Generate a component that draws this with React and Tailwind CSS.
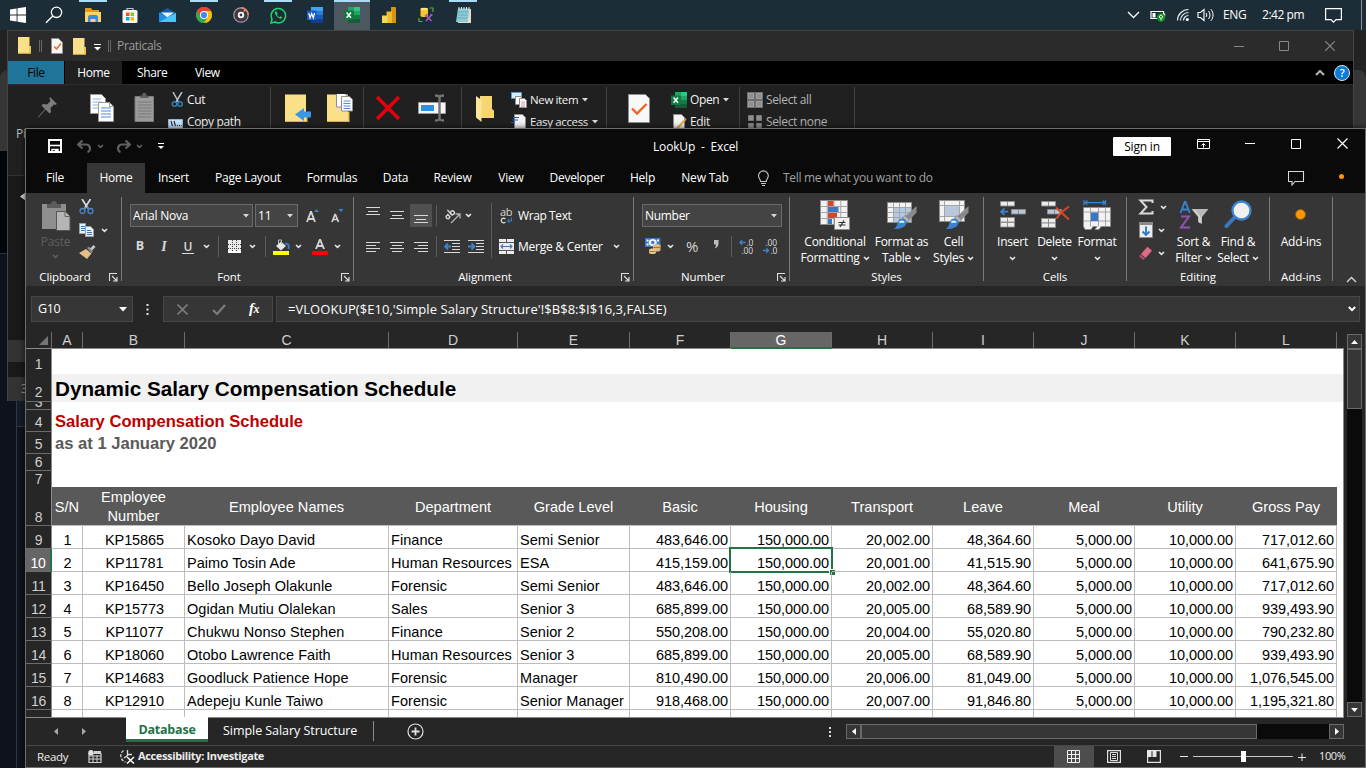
import React from "react";

/* ---------- helpers ---------- */

const Svg = ({ w, h, className = "", children }) => (
  <svg width={w} height={h} viewBox={`0 0 ${w} ${h}`} fill="none" className={`block shrink-0 ${className}`}>
    {children}
  </svg>
);

const Chevron = ({ className = "", color = "#e4e4e4" }) => (
  <Svg w={7} h={5} className={className}>
    <path d="M1 1l2.5 2.3L6 1" stroke={color} strokeWidth="1.6" />
  </Svg>
);

const Caret = ({ className = "", color = "#d8d8d8" }) => (
  <Svg w={6} h={4} className={className}>
    <path d="M0 0h6L3 3.5z" fill={color} />
  </Svg>
);

/* ---------- taskbar ---------- */

const WindowsLogo = () => (
  <Svg w={16} h={16} className="-ml-0.5">
    <path d="M0 2.4L6.6 1.4v6.1H0zM7.5 1.3L16 0v7.5H7.5zM0 8.5h6.6v6.1L0 13.6zM7.5 8.5H16V16l-8.5-1.3z" fill="#fff" />
  </Svg>
);

const SearchGlyph = () => (
  <Svg w={18} h={18} className="-ml-1">
    <circle cx="11.5" cy="6.3" r="5.2" stroke="#fff" strokeWidth="1.3" />
    <path d="M7.8 10L1 16.8" stroke="#fff" strokeWidth="1.4" />
  </Svg>
);

const ExplorerIcon = () => (
  <Svg w={16} h={14}>
    <path d="M0 0h6l1.500 2H14v3H0z" fill="#e19b16" />
    <path d="M0 4h16v10H0z" fill="#fcd462" />
    <path d="M3 14V8.500L4.500 7h7L13 8.500V14h-2.500v-3h-5v3z" fill="#3a8dd6" />
  </Svg>
);

const StoreIcon = () => (
  <Svg w={16} h={17}>
    <path d="M5 4V1.500h6V4" stroke="#b9c3c9" strokeWidth="1.2" />
    <rect x="0.500" y="3" width="15" height="13" rx="1.500" fill="#f7f7f7" />
    <path d="M4 5.500h3.500V9H4z" fill="#f1511b" />
    <path d="M8.500 5.500H12V9H8.500z" fill="#80cc28" />
    <path d="M4 10h3.500v3.500H4z" fill="#00adef" />
    <path d="M8.500 10H12v3.500H8.500z" fill="#fbbc09" />
  </Svg>
);

const MailIcon = () => (
  <Svg w={17} h={15}>
    <path d="M0 5l8.500-5L17 5v2H0z" fill="#0f5da8" />
    <path d="M0 4.500L8.500 9 17 4.500V14H0z" fill="#1f8fe0" />
    <path d="M2 4.500h13L8.500 9.500z" fill="#e8f4fc" />
    <path d="M0 14L17 5v9z" fill="#4fc3f7" />
  </Svg>
);

const ChromeIcon = () => (
  <Svg w={16} h={16}>
    <circle cx="8" cy="8" r="8" fill="#34a853" />
    <path d="M1.070 4A8 8 0 0 1 14.930 4L8 8z" fill="#ea4335" />
    <path d="M8 4h6.930A8 8 0 0 1 8 16l3.460-6z" fill="#fbbc05" />
    <path d="M1.070 4L4.540 10 8 8V4z" fill="#ea4335" />
    <path d="M1.070 4A8 8 0 0 0 8 16l3.460-6L4.540 10z" fill="#34a853" />
    <circle cx="8" cy="8" r="4" fill="#fff" />
    <circle cx="8" cy="8" r="3.100" fill="#4285f4" />
  </Svg>
);

const GrooveIcon = () => (
  <Svg w={16} h={16}>
    <circle cx="8" cy="8" r="7.200" fill="#3b3a40" stroke="#b58a9c" strokeWidth="1.300" />
    <path d="M8 .8A7.200 7.200 0 0 1 15.200 8" stroke="#e88a6a" strokeWidth="1.500" />
    <circle cx="8" cy="8" r="2.300" stroke="#fff" strokeWidth="1.800" />
    <path d="M10.500 4.500l2.500-2" stroke="#f0916b" strokeWidth="1.500" />
  </Svg>
);

const WhatsappIcon = () => (
  <Svg w={17} h={17}>
    <path d="M1 16l1-4A7.200 7.200 0 1 1 5 15z" stroke="#25d366" strokeWidth="1.500" />
    <path d="M5.500 4.500c-1 1.200-.7 2.800 1.200 4.800s3.700 3 5 1.900c.6-.6.5-1 .2-1.200l-1.500-.8-1.100 1c-1-.4-2-1.400-2.400-2.400l.8-1-.8-1.800c-.3-.7-.9-.9-1.400-.5z" fill="#25d366" />
  </Svg>
);

const WordIcon = () => (
  <Svg w={16} h={16}>
    <path d="M4 0h12v4H4z" fill="#41a5ee" />
    <path d="M4 4h12v4H4z" fill="#2b7cd3" />
    <path d="M4 8h12v4H4z" fill="#185abd" />
    <path d="M4 12h12v4H4z" fill="#103f91" />
    <path d="M0 3.500h9.500v9.500H0z" fill="#185abd" />
    <path d="M1.800 6l1.300 5 1.600-4.500L6.300 11l1.300-5" stroke="#fff" strokeWidth="1.200" />
  </Svg>
);

const ExcelIcon = () => (
  <Svg w={16} h={16}>
    <path d="M4 0h6v4H4z" fill="#21a366" />
    <path d="M10 0h6v4h-6z" fill="#33c481" />
    <path d="M4 4h6v8H4z" fill="#107c41" />
    <path d="M10 4h6v4h-6z" fill="#21a366" />
    <path d="M10 8h6v4h-6z" fill="#107c41" />
    <path d="M4 12h12v4H4z" fill="#185c37" />
    <path d="M0 3.500h9.500v9.500H0z" fill="#0e7a40" />
    <path d="M2.600 5.600l4.400 5.200M7 5.600l-4.400 5.200" stroke="#fff" strokeWidth="1.500" />
  </Svg>
);

const PowerBiIcon = () => (
  <Svg w={14} h={16}>
    <path d="M9 0h4a1 1 0 0 1 1 1v15H9z" fill="#d9930f" />
    <path d="M4.500 4.500H10V16H4.500z" fill="#eebc2c" />
    <path d="M0 8.500h5.500V16H0z" fill="#f6d751" />
  </Svg>
);

const DataToolIcon = () => (
  <Svg w={16} h={16}>
    <path d="M2.500 2c0-1.500 7.500-1.500 7.500 0v7c0 1.300-7.500 1.300-7.500 0z" fill="#f4c62a" />
    <ellipse cx="6.250" cy="2" rx="3.750" ry="1.200" fill="#ffe27a" />
    <path d="M11.500 1H15v4M1 11v3.500h3.500" stroke="#4caf3f" strokeWidth="1.200" />
    <path d="M8 8.500l5.500 5.500M13.500 8L8 14" stroke="#a35bc4" strokeWidth="1.500" />
    <path d="M7 9.500l2.500-2.500M12 7.500l2.500 1" stroke="#a35bc4" strokeWidth="1.500" />
  </Svg>
);

const NotepadIcon = () => (
  <Svg w={17} h={17}>
    <path d="M4 2h12v14H3z" fill="#e8dcc4" />
    <path d="M3 1.500h11.500L12.500 15H1z" fill="#8fc9d6" />
    <path d="M3.200 5h10M2.800 8h10M2.400 11h10" stroke="#5ea8ba" strokeWidth=".8" />
    <path d="M4 0v2.500M6.500 0v2.500M9 0v2.500M11.500 0v2.500M14 0v2.500" stroke="#dfe9ec" strokeWidth="1" />
  </Svg>
);

const taskItems = [
  { icon: <WindowsLogo /> },
  { icon: <SearchGlyph /> },
  { icon: <ExplorerIcon />, open: true },
  { icon: <StoreIcon /> },
  { icon: <MailIcon /> },
  { icon: <ChromeIcon />, open: true },
  { icon: <GrooveIcon /> },
  { icon: <WhatsappIcon />, open: true },
  { icon: <WordIcon /> },
  { icon: <ExcelIcon />, active: true },
  { icon: <PowerBiIcon /> },
  { icon: <DataToolIcon /> },
  { icon: <NotepadIcon />, open: true },
];

const Taskbar = () => (
  <div className="flex h-[30px] w-full bg-[#1c2d37]">
    <div className="ml-px flex gap-px">
      {taskItems.map((t, i) => (
        <div key={i} className={`flex h-[30px] w-9 flex-col items-center ${t.active ? "bg-[#4b5860]" : ""}`}>
          <div className={`h-0.5 ${t.active ? "w-9 bg-[#a9dcf7]" : t.open ? "w-7 bg-[#a9dcf7]" : "w-7"}`} />
          <div className="flex h-[26px] items-center">{t.icon}</div>
        </div>
      ))}
    </div>
    <div className="ml-auto flex items-center text-white">
      <Svg w={13} h={8} className="mr-[10px]">
        <path d="M1 1l5.500 5.500L12 1" stroke="#fff" strokeWidth="1.300" />
      </Svg>
      <Svg w={16} h={13} className="mr-[10px]">
        <path d="M1 2.500h12.500v7H1z" stroke="#fff" strokeWidth="1.200" />
        <path d="M2.500 4h3v4.500h-3z" fill="#fff" />
        <path d="M14 4.500h1.200v3H14z" fill="#fff" />
        <circle cx="11" cy="8.500" r="4.300" fill="#12901f" />
        <path d="M11 5.700l2 2.300-2 1.500-2-1.500zM11 9v2.500" stroke="#fff" strokeWidth=".9" />
      </Svg>
      <Svg w={14} h={14} className="mr-[7px]">
        <path d="M1.500 12.500A11 11 0 0 1 12.500 1.500M4.500 12.500a8 8 0 0 1 8-8M7.500 12.500a5 5 0 0 1 5-5" stroke="#e8eef0" strokeWidth="1.200" />
        <circle cx="11.300" cy="11.500" r="1.500" fill="#fff" />
      </Svg>
      <Svg w={17} h={14} className="mr-[9px]">
        <path d="M1 4.500h2.500L7 1.500v11L3.500 9.500H1z" stroke="#fff" strokeWidth="1.100" />
        <path d="M9 5c1 1.200 1 2.800 0 4M11.500 3c2 2.400 2 5.600 0 8M13.800 1.200c3 3.500 3 8.100 0 11.600" stroke="#fff" strokeWidth="1" />
      </Svg>
      <span className="w-[39px] text-[12px] tracking-[-0.4px]">ENG</span>
      <span className="w-[63px] whitespace-nowrap text-[12px] tracking-[-0.45px]">2:42 pm</span>
      <Svg w={17} h={16} className="mr-[19px]">
        <path d="M.6 1.600h15.800v11H11l-2.500 2.600-2.500-2.600H.6z" stroke="#fff" strokeWidth="1.200" />
      </Svg>
      <div className="mr-1 h-[30px] w-px bg-[#86929a]" />
    </div>
  </div>
);

/* ---------- file explorer ---------- */

const FolderSmall = () => (
  <Svg w={13} h={17}>
    <path d="M0 0h11.500v16.500H0z" fill="#fbe08a" />
    <path d="M11 9h2v7.500h-2z" fill="#e9c65c" />
    <path d="M0 15.800h13v.8H0z" fill="#e0b94a" />
  </Svg>
);

const Page = ({ w, h, children }) => (
  <Svg w={w} h={h}>
    <path d={`M.5 .5H${w - 4.5}L${w - 0.5} 4.500V${h - 0.5}H.5z`} fill="#f8f8f8" stroke="#8e8e8e" />
    {children}
  </Svg>
);

const CopyBig = () => (
  <Svg w={24} h={28}>
    <path d="M.5 .5h11l4 4v15H.5z" fill="#fff" stroke="#9a9a9a" />
    <path d="M2.500 5h8M2.500 8h9M2.500 11h9M2.500 14h9" stroke="#8eb0dd" strokeWidth="1.200" />
    <path d="M8.500 8.500h11l4 4v15h-15z" fill="#fff" stroke="#9a9a9a" />
    <path d="M11 14h10M11 17h10M11 20h10M11 23h10" stroke="#4f8be0" strokeWidth="1.200" />
    <path d="M19.500 8.500v4h4" stroke="#9a9a9a" />
  </Svg>
);

const ExDivider = ({ className = "" }) => <div className={`mt-0.5 h-[42px] w-px shrink-0 bg-[#414141] ${className}`} />;

const exText = "whitespace-nowrap text-[12px] leading-4 tracking-[-0.35px]";
const exTextNarrow = "whitespace-nowrap text-[11.5px] leading-4 tracking-[-0.36px]";

const FolderBig = ({ children }) => (
  <Svg w={27} h={29}>
    <path d="M0 .5h21v27H0z" fill="#fbe08a" />
    <path d="M21 18h1.500v9.500H21z" fill="#e5bf55" />
    <path d="M0 27h22.500v1H0z" fill="#dcb445" />
    {children}
  </Svg>
);

const SelectIcon = ({ boxed }) => (
  <Svg w={16} h={16}>
    {boxed && <path d="M0 0h16v16H0z" fill="#6d6d6d" />}
    <path d="M1.500 1.500h5v5h-5zM9.500 1.500h5v5h-5zM1.500 9.500h5v5h-5zM9.500 9.500h5v5h-5z" fill="#8e8e8e" stroke={boxed ? "#a2a2a2" : "#777"} />
  </Svg>
);

const Explorer = () => (
  <div className="absolute left-[7px] top-[30px] h-[371px] w-[1347px] overflow-hidden border-x border-t border-[#454545] bg-[#191919]">
    <div className="flex h-[30px] items-center bg-[#2b2b2b]">
      <div className="-mt-px ml-[10px]"><FolderSmall /></div>
      <div className="ml-[8px] flex h-3 w-[3px] border-x border-[#666]" />
      <div className="ml-[9px]">
        <Page w={12} h={16}><path d="M3 8.500l2.500 2.500L10 5.500" stroke="#f0641e" strokeWidth="1.500" /></Page>
      </div>
      <div className="ml-[10px]"><FolderSmall /></div>
      <Svg w={7} h={7} className="ml-[8px] mt-[3px]"><path d="M0 .5h7" stroke="#fff" /><path d="M0 3h7L3.500 6.500z" fill="#fff" /></Svg>
      <div className="ml-[7px] flex h-3 w-[3px] border-x border-[#666]" />
      <span className="ml-[6px] whitespace-nowrap text-[12px] tracking-[-0.32px] text-[#9b9b9b]">Praticals</span>
      <Svg w={10} h={1} className="ml-auto"><path d="M0 .5h10" stroke="#8a8a8a" /></Svg>
      <Svg w={10} h={10} className="ml-[35px]"><path d="M.5 .5h9v9h-9z" stroke="#8a8a8a" /></Svg>
      <Svg w={10} h={10} className="ml-[36px] mr-[18px]"><path d="M.3 .3l9.400 9.400M9.700 .3L.3 9.700" stroke="#8a8a8a" strokeWidth="1.200" /></Svg>
    </div>
    <div className="flex h-[23px] items-center bg-black text-[12px] tracking-[-0.38px] text-white">
      <div className="flex h-full w-14 items-center justify-center bg-[#1f7499] text-black">File</div>
      <div className="ml-px flex h-full w-[57px] items-center justify-center bg-[#202020]">Home</div>
      <span className="ml-[15px] w-[58px]">Share</span>
      <span>View</span>
      <Svg w={10} h={7} className="ml-auto"><path d="M1 6l4-4 4 4" stroke="#aeb4b8" strokeWidth="2" /></Svg>
      <div className="ml-[9px] mr-[3px] flex size-4 items-center justify-center rounded-full border border-[#d5e6f7] bg-[#0b7bdc] text-[11px] font-semibold leading-none">?</div>
    </div>
    <div className="flex h-[92px] items-start border-b border-t border-b-[#333] border-t-[#2c2c2c] bg-[#202020] text-[#f2f2f2]">
      <div className="flex w-[82px] flex-col">
        <Svg w={22} h={22} className="ml-[29px] mt-3">
          <path d="M13 0l7 7-2 1-1-.5-3.500 3.500.5 4-1.500 1.500-4-4-7 8-.5-.5L8 12 4.500 8.500 6 7l4 .5L13.500 4 12.500 2z" fill="#7d7d7d" />
        </Svg>
        <span className="ml-[8px] mt-[7px] text-[12px] leading-4 tracking-[-0.3px] text-[#bdbdbd]">Pi</span>
      </div>
      <div className="mt-[9px]"><CopyBig /></div>
      <Svg w={21} h={29} className="ml-[20px] mt-2">
        <path d="M1 3.500h18.500v25H1z" fill="#9c9c9c" stroke="#7a7a7a" />
        <path d="M6 5V2.500h2.500V0h3.500v2.500h2.500V5z" fill="#5e5e5e" />
        <path d="M3.500 9h14M3.500 12h14M3.500 15h14M3.500 18h14M3.500 21h14M3.500 24h14" stroke="#787878" />
      </Svg>
      <div className="ml-[13px] mt-[7px] flex w-[102px] flex-col gap-[6px]">
        <div className="flex h-4 items-center">
          <Svg w={13} h={16} className="ml-[3px] mr-[3px]">
            <path d="M2 0l5.500 10M11 0L5 10" stroke="#b7c3cc" strokeWidth="1.500" />
            <circle cx="3.500" cy="12" r="2.300" stroke="#2b7fb8" strokeWidth="1.500" />
            <circle cx="9" cy="12" r="2.300" stroke="#2b7fb8" strokeWidth="1.500" />
          </Svg>
          <span className={exText}>Cut</span>
        </div>
        <div className="flex h-4 items-center">
          <Svg w={15} h={10} className="mr-[4px] mt-1">
            <path d="M.5 .5h14v9H.5z" fill="#c6e2f5" stroke="#8fb9d6" />
            <path d="M3 2l1.500 5M6 2l1.500 5M9 6.500h1M11 6.500h1M13 6.500h.6" stroke="#223" strokeWidth="1.100" />
          </Svg>
          <span className={exText}>Copy path</span>
        </div>
      </div>
      <ExDivider />
      <div className="ml-[14px] mt-[9px]">
        <FolderBig><path d="M26 17.500v6h-7v3.500l-9-6.500 9-6.500v3.500z" fill="#3c97e3" /></FolderBig>
      </div>
      <div className="ml-[15px] mt-[9px]">
        <FolderBig>
          <path d="M9.500 -1h8l3 3v11h-11z" fill="#fff" stroke="#8e8e8e" />
          <path d="M14.500 2.500h8l3 3V17h-11z" fill="#fff" stroke="#8e8e8e" />
          <path d="M16.500 7h7M16.500 9.500h7M16.500 12h7M16.500 14.500h7" stroke="#4f8be0" />
        </FolderBig>
      </div>
      <ExDivider className="ml-[9px]" />
      <Svg w={26} h={26} className="ml-[11px] mt-[10px]"><path d="M2 2l22 22M24 2L2 24" stroke="#e3000f" strokeWidth="3.600" /></Svg>
      <Svg w={29} h={28} className="ml-[17px] mt-[9px]">
        <path d="M.5 8.500h27v11H.5z" fill="#f6f6f6" stroke="#9a9a9a" />
        <path d="M3 11h13v6H3z" fill="#2f8fe0" />
        <path d="M17 1.500c3 0 4 .5 4.500 1.500.5-1 1.500-1.500 4.500-1.500M17 26.500c3 0 4-.5 4.500-1.500.5 1 1.500 1.500 4.500 1.500M21.500 3v22" stroke="#737373" strokeWidth="2.400" />
      </Svg>
      <ExDivider className="ml-[14px]" />
      <Svg w={19} h={28} className="ml-[14px] mt-[10px]">
        <path d="M4 1h12v13l2 1.500V23H4z" fill="#f7d571" />
        <path d="M0 1l5.500 4v22L0 22.500z" fill="#fde69a" />
      </Svg>
      <div className="ml-[16px] mt-[7px] flex w-[95px] flex-col gap-[6px]">
        <div className="flex h-4 items-center">
          <Svg w={16} h={16} className="mr-[3px]">
            <path d="M.5 .5h10v6H.5z" fill="#d8ecf8" stroke="#5b9cc9" />
            <path d="M4.500 4.500h6v8h-6z" fill="#fff" stroke="#8e8e8e" />
            <path d="M8.500 6.500h5l2 2v7h-7z" fill="#fff" stroke="#8e8e8e" />
            <path d="M10 10h4M10 12h4M10 14h4" stroke="#d07a90" strokeWidth=".8" />
          </Svg>
          <span className={exTextNarrow}>New item</span>
          <Caret className="ml-[4px]" />
        </div>
        <div className="flex h-4 items-center">
          <Svg w={16} h={16} className="mr-[3px]">
            <path d="M3.500 .5h8l3 3V16H3.500z" fill="#f4f4f4" stroke="#8e8e8e" />
            <path d="M2 3.500h6M1 6h6M0 8.500h4" stroke="#1a5fa8" strokeWidth="1.200" />
          </Svg>
          <span className={exTextNarrow}>Easy access</span>
          <Caret className="ml-[4px]" />
        </div>
      </div>
      <ExDivider />
      <div className="ml-[21px] mt-[9px]">
        <Page w={22} h={29}><path d="M4 14.500l5 5 9.500-9.500" stroke="#f0641e" strokeWidth="2.400" /></Page>
      </div>
      <div className="ml-[21px] mt-[7px] flex w-[68px] flex-col gap-[6px]">
        <div className="flex h-4 items-center">
          <ExcelIcon />
          <span className={`ml-[3px] ${exText}`}>Open</span>
          <Caret className="ml-[4px]" />
        </div>
        <div className="flex h-4 items-center">
          <Svg w={16} h={16} className="mr-[3px]">
            <path d="M2.500 .5h8l3 3V16h-11z" fill="#f4f4f4" stroke="#8e8e8e" />
            <path d="M13.500 5.500L6 13.500l-1 2 2-1 7.500-8z" fill="#f0c230" stroke="#b98a12" strokeWidth=".6" />
            <path d="M13 5.500l1.500-1.500 1.200 1.200-1.500 1.500z" fill="#e08080" />
          </Svg>
          <span className={exText}>Edit</span>
        </div>
      </div>
      <ExDivider />
      <div className="ml-[7px] mt-[7px] flex w-[107px] flex-col gap-[6px] text-[#b4b4b4]">
        <div className="flex h-4 items-center gap-[3px]"><SelectIcon boxed /><span className={exText}>Select all</span></div>
        <div className="flex h-4 items-center gap-[3px]"><SelectIcon /><span className={exText}>Select none</span></div>
      </div>
      <ExDivider />
    </div>
    <div className="flex h-[164px] w-full items-start">
      <Svg w={10} h={10} className="ml-[12px] mt-[16px]"><path d="M6 0v9L0 4.500z" fill="#d8d8d8" /></Svg>
    </div>
    <div className="h-[22px] bg-[#333]" />
    <div className="mt-[15px] flex h-[24px] items-center bg-[#333] pl-[13px] text-[12px] text-[#9ea3ad]">3</div>
  </div>
);

/* ---------- excel: title and tabs ---------- */

const TitleBar = () => (
  <div className="flex h-[34px] items-center bg-[#0a0a0a] text-white">
    <div className="flex w-[600px] items-center">
      <Svg w={14} h={14} className="ml-[22px]">
        <path d="M1 1h12v12H1z" stroke="#fff" strokeWidth="2" />
        <path d="M1 6.500h12" stroke="#fff" strokeWidth="1.600" />
        <path d="M4 14v-3.500h6V14" stroke="#fff" strokeWidth="1.500" />
        <path d="M7 11h2.500v3H7z" fill="#fff" />
      </Svg>
      <Svg w={15} h={13} className="ml-[15px]">
        <path d="M5.500 .5L1 4.500l4.500 4M1.500 4.500H9a4 4 0 0 1 1.500 7.700" stroke="#606060" strokeWidth="2.200" />
      </Svg>
      <Chevron className="ml-[5px]" color="#606060" />
      <Svg w={15} h={13} className="ml-[12px]">
        <path d="M9.500 .5l4.500 4-4.500 4M13.500 4.500H6a4 4 0 0 0-1.500 7.700" stroke="#606060" strokeWidth="2.200" />
      </Svg>
      <Chevron className="ml-[5px]" color="#606060" />
      <Svg w={6} h={7} className="ml-[15px]"><path d="M0 .5h6" stroke="#fff" /><path d="M0 3h6L3 6z" fill="#fff" /></Svg>
    </div>
    <span className="ml-[27px] whitespace-pre pt-px text-[12px] tracking-[-0.17px]">LookUp  -  Excel</span>
    <div className="ml-auto flex items-center">
      <div className="mr-[26px] mt-px flex h-[19px] w-[58px] items-center justify-center rounded-[1px] bg-white text-[12px] tracking-[-0.2px] text-black">Sign in</div>
      <Svg w={13} h={10} className="-mt-[5px] mr-[35px]">
        <path d="M.5 .5h12v9H.5zM.5 2.500h12M6.500 8.500V4.500M4.500 6.500l2-2 2 2" stroke="#fff" />
      </Svg>
      <Svg w={10} h={1} className="-mt-[5px] mr-[36px]"><path d="M0 .5h10" stroke="#fff" /></Svg>
      <Svg w={10} h={10} className="-mt-[5px] mr-[36px]"><path d="M.5 .5h9v9h-9z" stroke="#fff" /></Svg>
      <Svg w={11} h={11} className="-mt-[5px] mr-[17px]"><path d="M.5 .5l10 10M10.500 .5l-10 10" stroke="#fff" strokeWidth="1.200" /></Svg>
    </div>
  </div>
);

const TabRow = () => (
  <div className="flex h-[30px] items-center whitespace-nowrap bg-[#0a0a0a] text-[12px] tracking-[-0.2px] text-white">
    <span className="w-[58px] text-center">File</span>
    <span className="ml-[3px] flex h-full w-[58px] items-center justify-center bg-[#363636]">Home</span>
    <span className="w-[57px] text-center">Insert</span>
    <span className="w-[91px] pl-px text-center">Page Layout</span>
    <span className="w-[77px] pl-px text-center">Formulas</span>
    <span className="w-[50px] pl-px text-center">Data</span>
    <span className="w-[65px] text-center">Review</span>
    <span className="w-[51px] pl-px text-center">View</span>
    <span className="w-[81px] pl-px text-center tracking-[-0.28px]">Developer</span>
    <span className="w-[51px] text-center">Help</span>
    <span className="w-[73px] pl-px text-center">New Tab</span>
    <Svg w={13} h={17} className="ml-[16px]">
      <path d="M3.500 11.500C3.500 9 1.500 8.500 1.500 5.800a4.900 4.900 0 0 1 9.800 0c0 2.700-2 3.200-2 5.700zM4 13.500h5M5 15.500h3" stroke="#c9c9c9" strokeWidth="1.100" />
    </Svg>
    <span className="ml-[13px] tracking-[-0.3px] text-[#a0a0a0]">Tell me what you want to do</span>
    <Svg w={17} h={15} className="ml-auto"><path d="M.5 .5h15v10H7L4 14v-3.500H.5z" stroke="#d8d8d8" strokeWidth="1.100" /></Svg>
    <div className="-mt-[3px] ml-[34px] mr-[21px] size-[5px] rounded-full bg-[#ff9500]" />
  </div>
);

/* ---------- excel: ribbon ---------- */

const Launcher = ({ className = "" }) => (
  <Svg w={9} h={9} className={className}>
    <path d="M.5 8V.5H8M3 3l4.500 4.500M8 4v4H4" stroke="#e0e0e0" strokeWidth="1.100" />
  </Svg>
);

const Group = ({ label, className, launcher, children }) => (
  <div className={`mt-1 flex h-[84px] shrink-0 flex-col border-r border-[#7a7a7a] ${className}`}>
    <div className="flex h-[72px] shrink-0">{children}</div>
    <div className="flex h-4 w-full shrink-0 items-center text-[11.5px] tracking-[-0.1px]">
      <span className={`flex-1 text-center ${launcher ? "pr-[5px]" : ""}`}>{label}</span>
      {launcher && <Launcher className="mr-[3px]" />}
    </div>
  </div>
);

const Lines = ({ d, w = 14, h = 12 }) => (
  <Svg w={w} h={h}><path d={d} stroke="#d9d9d9" /></Svg>
);

const Sep = ({ className = "" }) => <div className={`h-[21px] w-px shrink-0 bg-[#5c5c5c] ${className}`} />;

const BigButton = ({ icon, lines, className }) => (
  <div className={`flex flex-col items-center whitespace-nowrap text-[12px] leading-4 tracking-[-0.25px] ${className}`}>
    <div className="flex h-[37px] items-start pt-[3px]">{icon}</div>
    {lines.map((l, i) => (
      <div key={i} className="flex h-4 items-center">
        {l}
        {i === lines.length - 1 && l !== "Add-ins" && <Chevron className={l ? "ml-[3px] mt-px" : "mt-px"} />}
      </div>
    ))}
  </div>
);

const Grid = ({ x, y, cols, rows, cw, ch }) => (
  <g>
    <rect x={x} y={y} width={cols * cw} height={rows * ch} fill="#f2f2f2" stroke="#8c8c8c" />
    {Array.from({ length: cols - 1 }, (_, i) => (
      <path key={"c" + i} d={`M${x + (i + 1) * cw} ${y}v${rows * ch}`} stroke="#9c9c9c" strokeWidth=".9" />
    ))}
    {Array.from({ length: rows - 1 }, (_, i) => (
      <path key={"r" + i} d={`M${x} ${y + (i + 1) * ch}h${cols * cw}`} stroke="#9c9c9c" strokeWidth=".9" />
    ))}
  </g>
);

const Brush = () => (
  <g>
    <path d="M29.500 6v6.500L22.500 20l-4-4z" fill="#8a8a8a" />
    <path d="M18 15.500l4.500 4.500-2.500 2.500-4.500-4.500z" fill="#b9b9b9" stroke="#555" strokeWidth=".5" />
    <path d="M15 18.500c3 0 5 2 4.500 4.500-1 4-5 6-13 6 4-2 3-4.500 4.500-7.500 1-2 2-3 4-3z" fill="#3b82d0" />
    <path d="M12.500 22.500c1-1.500 3.500-1.500 4.500 0" stroke="#eef5fc" strokeWidth="2" />
  </g>
);

const CondIcon = () => (
  <Svg w={30} h={31}>
    <Grid x={0.5} y={0.5} cols={4} rows={4} cw={6.75} ch={6} />
    <path d="M8 1h5.500v5H8zM8 13h9v5H8z" fill="#d1492a" />
    <path d="M8 7h10.500v5H8zM8 19h4v5H8z" fill="#3b78c4" />
    <path d="M14.500 17.500h15v12h-15z" fill="#f0f0f0" stroke="#8c8c8c" />
    <path d="M18.500 22.500h7M18.500 25h7M24 20.500l-4 6.500" stroke="#333" strokeWidth="1.200" />
  </Svg>
);

const TableIcon = () => (
  <Svg w={30} h={30}>
    <Grid x={0.5} y={2.5} cols={4} rows={4} cw={6} ch={5} />
    <path d="M7 8h17v14H7z" fill="#b7c8da" />
    <path d="M12.500 8v14M18.500 8v14M7 12.500h17M7 17.500h17" stroke="#8fa2b6" strokeWidth=".8" />
    <Brush />
  </Svg>
);

const CellStyleIcon = () => (
  <Svg w={30} h={30}>
    <path d="M.5 .5h25v21H.5z" fill="#f2f2f2" stroke="#8c8c8c" />
    <path d="M5.500 .5v21M20.500 .5v21M.5 5.500h25M.5 16.500h25" stroke="#9c9c9c" strokeWidth=".9" />
    <path d="M6 6h14v10H6z" fill="#b7c8da" />
    <Brush />
  </Svg>
);

const Pair = ({ x, y, fill = "#ececec" }) => (
  <path d={`M${x} ${y}h7v4.500h-7zM${x + 7} ${y}h7v4.500h-7z`} fill={fill} stroke="#8c8c8c" strokeWidth=".9" />
);

const InsertIcon = () => (
  <Svg w={28} h={29}>
    <Pair x={1.5} y={1.5} />
    <Pair x={1.5} y={17.5} /><Pair x={1.5} y={22.5} />
    <Pair x={12.5} y={9.5} fill="#b7c8da" />
    <path d="M9 11.700H2.500M5.500 8.500L2 11.700l3.500 3.200" stroke="#3b82d0" strokeWidth="1.700" />
  </Svg>
);

const DeleteIcon = () => (
  <Svg w={30} h={29}>
    <Pair x={1.5} y={1.5} />
    <Pair x={1.5} y={18.5} /><Pair x={1.5} y={23} />
    <Pair x={7.5} y={9.5} fill="#b7c8da" />
    <path d="M16 7.500l13 12M29 6.500C24 10 19 14 16.500 18.500" stroke="#d1492a" strokeWidth="2.100" />
  </Svg>
);

const FormatIcon = () => (
  <Svg w={29} h={31}>
    <path d="M1 0v5.500M22.500 0v5.500M2 2.700h20M4.500 .5L2 2.700l2.500 2.200M19.500 .5L22 2.700l-2.500 2.200" stroke="#3b82d0" strokeWidth="1.200" />
    <path d="M.5 7.500h27v19H18l-2 3h-4l2-3h-4l-2 3H2l-1.500-3z" fill="#f2f2f2" stroke="#8c8c8c" strokeWidth=".9" />
    <path d="M7.500 7v19.500M15.500 7v19.500M22.500 7v19.500M.5 12h27M.5 21h27" stroke="#9c9c9c" strokeWidth=".9" />
    <path d="M8 12.500h7V21H8z" fill="#3b78c4" />
  </Svg>
);

const Ribbon = () => (
  <div className="flex h-[93px] bg-[#363636] text-white">
    <Group label="Clipboard" launcher className="w-[96px]">
      <div className="ml-[14px] flex w-[31px] flex-col items-center text-[12px] leading-4 tracking-[-0.2px] text-[#5f5f5f]">
        <Svg w={29} h={31} className="mb-[2px] ml-[2px] mt-[4px]">
          <path d="M0 3h24v25H0z" fill="#8f8f8f" />
          <path d="M5 3h4c0-4 6-4 6 0h4v4H5z" fill="#5c5c5c" />
          <path d="M14.500 10.500h9l4.500 4.500v14.500H14.500z" fill="#b5b5b5" stroke="#555" />
          <path d="M23 10.500v5h5" stroke="#666" />
        </Svg>
        <span>Paste</span>
        <Chevron className="mt-[4px]" color="#5f5f5f" />
      </div>
      <div className="ml-[8px] flex w-4 flex-col items-start pt-[2px]">
        <Svg w={15} h={16}>
          <path d="M3 0l6 9.500M11.500 0l-6 9.500" stroke="#d9d9d9" strokeWidth="1.700" />
          <circle cx="3.500" cy="12" r="2.500" stroke="#4a86c8" strokeWidth="1.300" />
          <circle cx="11.500" cy="12" r="2.500" stroke="#4a86c8" strokeWidth="1.300" />
          <path d="M8 8l2 2.500M6.500 8l-2 2.500" stroke="#4a86c8" strokeWidth="1.300" />
        </Svg>
        <Svg w={15} h={14} className="mt-[8px]">
          <path d="M.5 .5h6v10h-6z" fill="#f0f0f0" stroke="#a0a0a0" />
          <path d="M2 3.500h4M2 5.500h4M2 7.500h4" stroke="#3b78c4" />
          <path d="M6.500 3.500h5l3 3v7h-8z" fill="#f0f0f0" stroke="#a0a0a0" />
          <path d="M8 7.500h4M8 9.500h5M8 11.500h5" stroke="#3b78c4" />
        </Svg>
        <Svg w={17} h={15} className="mt-[8px]">
          <path d="M7 4l5.500 4.500L8 14 0 8z" fill="#e6be86" />
          <path d="M8 3l2-1.500L14 6.500 12.500 8z" fill="#8a8a8a" />
          <path d="M11 3.500L14.500 0l2 2-3.500 3.500z" fill="#c6c6c6" />
        </Svg>
      </div>
      <Chevron className="ml-[6px] mt-[31px]" />
    </Group>

    <Group label="Font" launcher className="w-[232px]">
      <div className="flex flex-col">
        <div className="mt-[7px] flex h-[23px] items-center text-[12px] tracking-[-0.2px]">
          <div className="ml-[8px] flex h-[23px] w-[123px] items-center justify-between border border-[#6a6a6a] bg-[#444] pl-[2px] pr-[3px]">Arial Nova<Caret /></div>
          <div className="ml-[2px] flex h-[23px] w-[43px] items-center justify-between border border-[#6a6a6a] bg-[#444] pl-[2px] pr-[4px]">11<Caret /></div>
          <Svg w={14} h={14} className="ml-[8px]">
            <path d="M1 13L4.800 3h.4L9 13M2.500 10h5" stroke="#d4d4d4" strokeWidth="1.800" />
            <path d="M8 3L10.500 0 13 3z" fill="#3b82d0" />
          </Svg>
          <Svg w={14} h={14} className="ml-[11px]">
            <path d="M1 13l3-7.500h.4L7.500 13M2 10.500h4.500" stroke="#d4d4d4" strokeWidth="1.700" />
            <path d="M7.500 0h5L10 3z" fill="#3b82d0" />
          </Svg>
        </div>
        <div className="mt-[9px] flex h-[21px] items-center text-[12.5px] leading-none">
          <span className="ml-[12px] w-3 text-center font-bold text-[#dadada]">B</span>
          <span className="ml-[12px] w-3 text-center font-['Liberation_Serif',serif] text-[14px] font-bold italic text-[#dadada]">I</span>
          <span className="ml-[12px] w-3 border-b border-[#dadada] text-center text-[12px] font-semibold leading-[13px] text-[#dadada]">U</span>
          <Chevron className="ml-[9px]" />
          <Sep className="ml-[8px]" />
          <Svg w={13} h={13} className="ml-[9px]">
            <path d="M0 0h13v13H0z" fill="#e9e9e9" />
            <path d="M4.500 0v13M8.500 0v13M0 4.500h13M0 8.500h13" stroke="#444" strokeDasharray="1 1" />
            <path d="M0 12h13" stroke="#fff" strokeWidth="2" />
          </Svg>
          <Chevron className="ml-[8px]" />
          <Sep className="ml-[9px]" />
          <Svg w={17} h={16} className="ml-[7px]">
            <path d="M3 7l5-4.500 5 4.500-5 4.500z" fill="#e8e8e8" />
            <path d="M5.500 5V1h3v4" stroke="#bbb" />
            <path d="M12 5c3-1 4.500 1 3.500 5" stroke="#3b78c4" strokeWidth="2" />
            <path d="M0 12h16v4H0z" fill="#ff0" />
          </Svg>
          <Chevron className="ml-[5px]" />
          <Svg w={17} h={16} className="ml-[10px]">
            <path d="M4 10L7.800 1h.4L12 10M5.500 7h5" stroke="#d4d4d4" strokeWidth="1.900" />
            <path d="M0 12h16v4H0z" fill="#f00" />
          </Svg>
          <Chevron className="ml-[5px]" />
        </div>
      </div>
    </Group>

    <Group label="Alignment" launcher className="w-[280px]">
      <div className="ml-[12px] flex w-[125px] flex-col">
        <div className="mt-[7px] flex h-[23px] items-center">
          <div className="-mt-[9px]"><Lines d="M0 2.500h14M2 6.500h10M0 9.500h14" /></div>
          <div className="ml-[10px]"><Lines d="M0 1.500h14M2 5.500h10M0 8.500h14" /></div>
          <div className="ml-[6px] flex h-[23px] w-[22px] items-end justify-center bg-[#505050] pb-px"><Lines d="M0 1.500h14M2 5.500h10M0 8.500h14" /></div>
          <Sep className="ml-[4px]" />
          <Svg w={17} h={16} className="ml-[7px]">
            <g transform="rotate(-42 5 6)" stroke="#d9d9d9" strokeWidth="1.400">
              <path d="M3.800 5v4.500M3.800 6.500a1.800 1.800 0 1 0 0 1.800M6.500 2v7.500" />
              <circle cx="8.400" cy="7.400" r="1.900" />
            </g>
            <path d="M7 15L15.500 6.500M11.500 6H16v4.500" stroke="#b5b5b5" strokeWidth="1.300" />
          </Svg>
          <Chevron className="ml-[4px]" />
        </div>
        <div className="mt-[9px] flex h-[21px] items-center">
          <Lines d="M0 1.500h14M0 4.500h10M0 7.500h14M0 10.500h10" />
          <div className="ml-[10px]"><Lines d="M0 1.500h14M2 4.500h10M0 7.500h14M2 10.500h10" /></div>
          <div className="ml-[10px]"><Lines d="M0 1.500h14M4 4.500h10M0 7.500h14M4 10.500h10" /></div>
          <Sep className="ml-[8px]" />
          <Svg w={17} h={13} className="ml-[7px]">
            <path d="M0 .5h16M8 3.500h8M8 6.500h8M8 9.500h8M0 12.500h16" stroke="#d9d9d9" />
            <path d="M7 6.500H1.500M4 3.500l-3 3 3 3" stroke="#3b82d0" strokeWidth="1.800" />
          </Svg>
          <Svg w={17} h={13} className="ml-[7px]">
            <path d="M0 .5h16M8 3.500h8M8 6.500h8M8 9.500h8M0 12.500h16" stroke="#d9d9d9" />
            <path d="M0 6.500h6M3.500 3.500l3 3-3 3" stroke="#3b82d0" strokeWidth="1.800" />
          </Svg>
        </div>
      </div>
      <div className="mt-[6px] h-[55px] w-px bg-[#5c5c5c]" />
      <div className="ml-[7px] flex flex-col whitespace-nowrap text-[12px] tracking-[-0.25px]">
        <div className="mt-[7px] flex h-[23px] items-center">
          <Svg w={14} h={16} className="ml-px mr-[4px] overflow-visible">
            <text x="0" y="8" fontSize="11" fontWeight="500" fill="#d9d9d9">ab</text>
            <path d="M5.500 10.800C3.500 9.600 1.300 10.500 1.300 12.500s2.200 3 4.200 1.800" stroke="#d9d9d9" strokeWidth="1.300" />
            <path d="M11.500 9.500v3.500H7.500M9.500 11l-2 2 2 2" stroke="#3b82d0" />
          </Svg>
          <span className="tracking-[-0.4px]">Wrap Text</span>
        </div>
        <div className="mt-[9px] flex h-[21px] items-center">
          <Svg w={15} h={15} className="mr-[4px]">
            <path d="M0 0h15v15H0z" fill="#ececec" />
            <path d="M0 3.500h15M0 11.500h15M7.500 0v3.500M7.500 11.500V15" stroke="#555" />
            <path d="M2 7.500h11M4 5.500l-2 2 2 2M11 5.500l2 2-2 2" stroke="#3b78c4" strokeWidth="1.100" />
          </Svg>
          <span>Merge &amp; Center</span>
          <Chevron className="ml-[10px]" />
        </div>
      </div>
    </Group>

    <Group label="Number" launcher className="w-[156px]">
      <div className="flex flex-col">
        <div className="ml-[8px] mt-[7px] flex h-[23px] w-[140px] items-center justify-between border border-[#6a6a6a] bg-[#444] pl-[2px] pr-[4px] text-[12px] tracking-[-0.3px]">Number<Caret /></div>
        <div className="mt-[9px] flex h-[21px] items-center">
          <Svg w={17} h={17} className="ml-[11px]">
            <path d="M0 0h15.500v9H0z" fill="#3b78c4" />
            <path d="M1.500 1.500h2v2h-2zM12 1.500h2v2h-2zM1.500 5.500h2v2h-2z" fill="#eef4fb" />
            <ellipse cx="7.750" cy="4.500" rx="4" ry="3.500" fill="#eef4fb" />
            <circle cx="7.750" cy="4.500" r="1.700" fill="#3b78c4" />
            <path d="M8 7.500c0-2 7.500-2 7.500 0v4.500c0 2-7.500 2-7.500 0z" fill="#e0b87e" />
            <path d="M4 12c0-2 7-2 7 0v2.500c0 2-7 2-7 0z" fill="#e8c48e" />
            <path d="M4.500 13.500h6M8.500 9.500h6.500" stroke="#8d6a38" strokeWidth=".8" />
          </Svg>
          <Chevron className="ml-[5px]" />
          <span className="ml-[12px] w-[14px] text-[15px] font-medium leading-none text-[#d4d4d4]">%</span>
          <Svg w={6} h={9} className="-mt-[4px] ml-[13px]"><path d="M1 0h4.500v3.500C5.500 6 4 8 1.500 8.500 2.500 7 3 6 3 4.500H1z" fill="#bdbdbd" /></Svg>
          <Sep className="ml-[12px]" />
          <Svg w={16} h={15} className="ml-[7px] overflow-visible">
            <text x="7.500" y="6.500" fontSize="8.500" letterSpacing="-.2" fill="#dedede">.0</text>
            <text x="2.500" y="14.500" fontSize="8.500" letterSpacing="-.2" fill="#dedede">.00</text>
            <path d="M6.500 3.500H1M3.200 1.200L1 3.500l2.200 2.300" stroke="#3b82d0" strokeWidth="1.300" />
          </Svg>
          <Svg w={16} h={15} className="ml-[8px] overflow-visible">
            <text x="2.500" y="6.500" fontSize="8.500" letterSpacing="-.2" fill="#dedede">.00</text>
            <text x="7.500" y="14.500" fontSize="8.500" letterSpacing="-.2" fill="#dedede">.0</text>
            <path d="M0 11.500h5.500M3.300 9.200l2.200 2.300-2.200 2.300" stroke="#3b82d0" strokeWidth="1.300" />
          </Svg>
        </div>
      </div>
    </Group>

    <Group label="Styles" className="w-[194px]">
      <BigButton className="ml-[10px] w-[70px]" icon={<CondIcon />} lines={["Conditional", "Formatting"]} />
      <BigButton className="ml-[3px] w-[57px]" icon={<TableIcon />} lines={["Format as", "Table"]} />
      <BigButton className="ml-[2px] w-[43px]" icon={<CellStyleIcon />} lines={["Cell", "Styles"]} />
    </Group>

    <Group label="Cells" className="w-[143px]">
      <BigButton className="ml-[8px] w-[41px]" icon={<InsertIcon />} lines={["Insert", ""]} />
      <BigButton className="w-[43px]" icon={<DeleteIcon />} lines={["Delete", ""]} />
      <BigButton className="w-[42px]" icon={<FormatIcon />} lines={["Format", ""]} />
    </Group>

    <Group label="Editing" className="w-[143px]">
      <div className="ml-[11px] mt-[1px] flex w-[30px] flex-col">
        <div className="flex h-[18px] items-center">
          <Svg w={16} h={16}><path d="M14.500 4V1.500h-12L8.500 8l-6 6.500h12V12" stroke="#d9d9d9" strokeWidth="2" /></Svg>
          <Chevron className="ml-[6px]" />
        </div>
        <div className="mt-[5px] flex h-[18px] items-center">
          <Svg w={14} h={16} className="ml-px">
            <path d="M.5 .5h13v15H.5z" fill="#ececec" stroke="#8a8a8a" />
            <path d="M0 0h14v3H0z" fill="#8a8a8a" />
            <path d="M7 4.500v8M3.500 9.500L7 13l3.500-3.500" stroke="#2f78c8" strokeWidth="1.900" />
          </Svg>
          <Chevron className="ml-[5px]" />
        </div>
        <div className="mt-[5px] flex h-[18px] items-center">
          <Svg w={14} h={14} className="ml-px">
            <path d="M8.500 .8L13 4.800 6.500 12 2 8z" fill="#e06a85" />
            <path d="M1.500 8.600L5.900 12.600 4.500 14 0 10.500z" fill="#b64d66" />
          </Svg>
          <Chevron className="ml-[5px]" />
        </div>
      </div>
      <BigButton
        className="ml-[6px] w-[39px]"
        icon={
          <Svg w={30} h={30}>
            <path d="M1.500 13L5.800 2h.6L10.800 13M3 9.500h6.500" stroke="#3b82d0" strokeWidth="1.900" />
            <path d="M2 16.500h8L2 27.500h9" stroke="#8e55b5" strokeWidth="2" />
            <path d="M12.500 9h17l-6.500 8v7l-4-2v-5z" fill="#b9b9b9" />
            <path d="M15 10l6 7v6" stroke="#e8e8e8" />
          </Svg>
        }
        lines={["Sort &", "Filter"]}
      />
      <BigButton
        className="ml-[3px] w-[44px]"
        icon={
          <Svg w={28} h={28}>
            <path d="M11 17L2.500 26" stroke="#3b78c4" strokeWidth="4" strokeLinecap="round" />
            <circle cx="17.500" cy="10.500" r="9" fill="#f0f0f0" stroke="#3b82d0" strokeWidth="2.300" />
          </Svg>
        }
        lines={["Find &", "Select"]}
      />
    </Group>

    <Group label="Add-ins" className="w-[63px]">
      <BigButton
        className="w-full"
        icon={<div className="mr-[2px] mt-[9px] size-[11px] rounded-full border border-[#8a5a1b] bg-[#ff9500]" />}
        lines={["Add-ins"]}
      />
    </Group>
    <Svg w={11} h={7} className="ml-auto mr-[8px] mt-[83px]"><path d="M1 6l4.500-4.500L10 6" stroke="#d9d9d9" strokeWidth="1.300" /></Svg>
  </div>
);

/* ---------- excel: formula bar ---------- */

const FormulaBar = () => (
  <div className="flex h-[46px] pt-[10px] text-[12px] text-white">
    <div className="ml-[5px] flex h-[26px] w-[102px] items-center justify-between border border-[#474747] bg-[#363636] pl-[6px] pr-[5px] text-[12.5px] tracking-[-0.4px]">
      G10
      <Svg w={8} h={5}><path d="M0 0h8L4 4.500z" fill="#fff" /></Svg>
    </div>
    <Svg w={3} h={11} className="ml-[13px] mt-[8px]"><path d="M.5 0h2v2h-2zM.5 4.500h2v2h-2zM.5 9h2v2h-2z" fill="#e6e6e6" /></Svg>
    <div className="ml-[14px] flex h-[26px] w-[110px] items-center border border-[#474747] bg-[#363636]">
      <Svg w={11} h={11} className="ml-[13px]"><path d="M.5 .5l10 10M10.500 .5l-10 10" stroke="#7b7b7b" strokeWidth="1.600" /></Svg>
      <Svg w={14} h={11} className="ml-[24px]"><path d="M1 6l4 4L13 1" stroke="#7b7b7b" strokeWidth="2.200" /></Svg>
      <span className="-mt-[2px] ml-[23px] font-['Liberation_Serif',serif] text-[15px] font-bold italic leading-none tracking-[-0.5px]">f<span className="text-[12px]">x</span></span>
    </div>
    <div className="ml-[3px] flex h-[26px] w-[1084px] items-center justify-between border border-[#474747] bg-[#363636] pl-[11px] pr-[3px]">
      <span className="whitespace-nowrap pt-px text-[13px] tracking-[0.05px]">=VLOOKUP($E10,'Simple Salary Structure'!$B$8:$I$16,3,FALSE)</span>
      <Svg w={8} h={6}><path d="M.8 1l3.200 3.200L7.200 1" stroke="#fff" strokeWidth="2" /></Svg>
    </div>
  </div>
);

/* ---------- excel: sheet ---------- */

const cols = [
  ["A", "w-[31px]"], ["B", "w-[102px]"], ["C", "w-[204px]"], ["D", "w-[129px]"], ["E", "w-[112px]"], ["F", "w-[101px]"],
  ["G", "w-[101px]"], ["H", "w-[101px]"], ["I", "w-[101px]"], ["J", "w-[101px]"], ["K", "w-[101px]"], ["L", "w-[101px]"],
];

const heads = ["S/N", "Employee Number", "Employee Names", "Department", "Grade Level", "Basic", "Housing", "Transport", "Leave", "Meal", "Utility", "Gross Pay"];

const people = [
  ["1", "KP15865", "Kosoko Dayo David", "Finance", "Semi Senior", "483,646.00", "150,000.00", "20,002.00", "48,364.60", "5,000.00", "10,000.00", "717,012.60"],
  ["2", "KP11781", "Paimo Tosin Ade", "Human Resources", "ESA", "415,159.00", "150,000.00", "20,001.00", "41,515.90", "5,000.00", "10,000.00", "641,675.90"],
  ["3", "KP16450", "Bello Joseph Olakunle", "Forensic", "Semi Senior", "483,646.00", "150,000.00", "20,002.00", "48,364.60", "5,000.00", "10,000.00", "717,012.60"],
  ["4", "KP15773", "Ogidan Mutiu Olalekan", "Sales", "Senior 3", "685,899.00", "150,000.00", "20,005.00", "68,589.90", "5,000.00", "10,000.00", "939,493.90"],
  ["5", "KP11077", "Chukwu Nonso Stephen", "Finance", "Senior 2", "550,208.00", "150,000.00", "20,004.00", "55,020.80", "5,000.00", "10,000.00", "790,232.80"],
  ["6", "KP18060", "Otobo Lawrence Faith", "Human Resources", "Senior 3", "685,899.00", "150,000.00", "20,005.00", "68,589.90", "5,000.00", "10,000.00", "939,493.90"],
  ["7", "KP14683", "Goodluck Patience Hope", "Forensic", "Manager", "810,490.00", "150,000.00", "20,006.00", "81,049.00", "5,000.00", "10,000.00", "1,076,545.00"],
  ["8", "KP12910", "Adepeju Kunle Taiwo", "Forensic", "Senior Manager", "918,468.00", "150,000.00", "20,007.00", "91,846.80", "5,000.00", "10,000.00", "1,195,321.80"],
];

const cellAlign = (i) => {
  if (i === 0) return "pl-px text-center";
  if (i === 1) return "pl-[2px] text-center tracking-[-0.1px]";
  if (i < 5) return "pl-[2px] text-left tracking-[0.05px]";
  return "pr-[2px] text-right tracking-[-0.06px]";
};

const RowHead = ({ n, active, leading = "leading-[16px]", border = "border-b border-b-[#6b6b6b]" }) => (
  <div
    className={`flex w-[26px] shrink-0 items-end justify-center overflow-hidden text-[14px] tracking-[-0.3px] ${leading} ${border} ${
      active ? "border-r-2 border-r-[#217346] bg-[#666] text-white" : "border-r border-r-[#8a8a8a] bg-[#262626] text-[#d0d0d0]"
    }`}
  >
    {n}
  </div>
);

const Sheet = () => (
  <div className="h-[386px] w-[1318px] overflow-hidden font-['Liberation_Sans',sans-serif]">
    <div className="flex h-[17px] border-b border-[#8a8a8a] text-[14px] leading-[16px] text-[#cfcfcf]">
      <div className="flex w-[26px] items-end justify-end border-r border-[#6b6b6b] pb-[3px] pr-[3px]">
        <Svg w={9} h={9}><path d="M9 0v9H0z" fill="#757575" /></Svg>
      </div>
      {cols.map(([c, w]) => (
        <div key={c} className={`border-r border-[#6b6b6b] text-center ${w} ${c === "G" ? "-mb-px border-b-2 border-b-[#217346] bg-[#666] text-white" : ""}`}>{c}</div>
      ))}
    </div>
    <div className="flex h-[369px] flex-col border-r border-[#8a8a8a] bg-white text-black">
      <div className="flex h-[26px]"><RowHead n="1" leading="leading-[19px]" /></div>
      <div className="-mt-px flex h-[28px]">
        <RowHead n="2" leading="leading-[18px]" />
        <div className="flex flex-1 items-center bg-[#f1f1f1] pl-[3px] pt-[2px] text-[20.7px] font-bold leading-none">Dynamic Salary Compensation Schedule</div>
      </div>
      <div className="flex h-[8px]"><RowHead n="3" leading="leading-[13px]" /></div>
      <div className="flex h-[22px]">
        <RowHead n="4" leading="leading-[18px]" />
        <span className="pl-[3px] text-[16.6px] font-bold leading-[23px] text-[#c00000]">Salary Compensation Schedule</span>
      </div>
      <div className="flex h-[22px]">
        <RowHead n="5" leading="leading-[17px]" />
        <span className="pl-[3px] text-[16.6px] font-bold leading-[23px] text-[#595959]">as at 1 January 2020</span>
      </div>
      <div className="flex h-[17px]"><RowHead n="6" /></div>
      <div className="flex h-[17px]"><RowHead n="7" /></div>
      <div className="-mt-px flex h-[39px]">
        <RowHead n="8" />
        <div className="flex border-b border-[#bdbdbd] bg-[#595959] pt-[2px] text-[14.6px] leading-[19px] text-white">
          {heads.map((h, i) => (
            <div key={h} className={`flex items-center justify-center pr-px text-center ${cols[i][1]}`}>
              <span className={i === 1 ? "w-[72px]" : "whitespace-nowrap"}>{h}</span>
            </div>
          ))}
        </div>
      </div>
      {people.map((p, r) => (
        <div key={p[1]} className="flex h-[23px] shrink-0">
          <RowHead n={r + 9} active={r === 1} />
          {p.map((v, i) => (
            <div key={i} className={`relative whitespace-nowrap border-b border-r border-[#bdbdbd] text-[14.5px] leading-[28px] ${cols[i][1]} ${cellAlign(i)}`}>
              <div className="h-[22px]">{v}</div>
              {r === 1 && i === 6 && (
                <div className="absolute -left-[2px] -top-[2px] h-[26px] w-[104px] border-2 border-[#217346]">
                  <div className="absolute -bottom-[4px] -right-[4px] size-[6px] border-l border-t border-white bg-[#217346]" />
                </div>
              )}
            </div>
          ))}
        </div>
      ))}
      <div className="flex h-[8px]">
        <RowHead n="" border="" />
        {cols.map(([c, w]) => <div key={c} className={`border-r border-[#bdbdbd] ${w}`} />)}
      </div>
    </div>
  </div>
);

const VScroll = () => (
  <div className="ml-[3px] mt-[2px] flex h-[383px] w-[15px] flex-col bg-[#0a0a0a]">
    <div className="flex h-[15px] items-center justify-center border border-[#6a6a6a] bg-[#363636]">
      <Svg w={7} h={4}><path d="M0 4h7L3.500 0z" fill="#fff" /></Svg>
    </div>
    <div className="h-[60px] border border-[#6a6a6a] bg-[#363636]" />
    <div className="mt-auto flex h-[15px] items-center justify-center border border-[#6a6a6a] bg-[#363636]">
      <Svg w={7} h={4}><path d="M0 0h7L3.500 4z" fill="#fff" /></Svg>
    </div>
  </div>
);

/* ---------- excel: sheet tabs and status ---------- */

const SheetTabs = () => (
  <div className="flex h-[28px] text-[12.5px] text-white">
    <div className="flex h-full w-[100px] items-center border-t border-[#8a8a8a]">
      <Svg w={4} h={7} className="ml-[28px]"><path d="M4 0v7L0 3.500z" fill="#a8a8a8" /></Svg>
      <Svg w={4} h={7} className="ml-[24px]"><path d="M0 0v7l4-3.500z" fill="#a8a8a8" /></Svg>
    </div>
    <div className="flex h-[25px] w-[82px] items-center justify-center border-b-[3px] border-[#217346] bg-white pt-[5px] text-[12.5px] font-bold tracking-[-0.2px] text-[#217346]">Database</div>
    <div className="flex h-full flex-1 items-center border-t border-[#8a8a8a]">
      <span className="ml-[15px] w-[150px] whitespace-nowrap tracking-[-0.05px]">Simple Salary Structure</span>
      <div className="-mt-px h-5 w-px bg-[#8a8a8a]" />
      <Svg w={17} h={17} className="ml-[33px]">
        <circle cx="8.500" cy="8.500" r="7.500" stroke="#e0e0e0" strokeWidth="1.200" />
        <path d="M4.500 8.500h8M8.500 4.500v8" stroke="#e0e0e0" strokeWidth="1.800" />
      </Svg>
    </div>
    <div className="flex h-full w-[536px] items-center border-t border-[#8a8a8a]">
      <Svg w={2} h={10} className="ml-[21px]"><path d="M0 0h2v2H0zM0 4h2v2H0zM0 8h2v2H0z" fill="#d8d8d8" /></Svg>
      <div className="ml-[15px] flex h-[15px] w-[498px] bg-[#0a0a0a]">
        <div className="flex w-[15px] items-center justify-center border border-[#6a6a6a] bg-[#363636]"><Svg w={4} h={7}><path d="M4 0v7L0 3.500z" fill="#fff" /></Svg></div>
        <div className="w-[396px] border border-[#6a6a6a] bg-[#363636]" />
        <div className="ml-auto flex w-[15px] items-center justify-center border border-[#6a6a6a] bg-[#363636]"><Svg w={4} h={7}><path d="M0 0v7l4-3.500z" fill="#fff" /></Svg></div>
      </div>
    </div>
    <div className="w-[21px]" />
  </div>
);

const StatusBar = () => (
  <div className="flex h-[22px] items-center border-t border-[#464646] text-[11.5px] text-[#ececec]">
    <span className="ml-[11px] w-[51px] tracking-[-0.3px]">Ready</span>
    <Svg w={14} h={13}>
      <path d="M1 3.500h12v9H1z" stroke="#d0d0d0" strokeWidth="1.200" />
      <path d="M1 6h12M1 9h12M5 5v8M9 5v8" stroke="#d0d0d0" />
      <path d="M6 1h7v3H6z" fill="#d0d0d0" />
      <circle cx="3" cy="2.800" r="2.700" fill="#e0e0e0" />
    </Svg>
    <Svg w={16} h={15} className="ml-[17px]">
      <path d="M4.500 1.500a6.500 6.500 0 0 0 2 11.500" stroke="#d0d0d0" strokeWidth="1.400" strokeDasharray="3 1.500" />
      <path d="M8.500 1v5.500L5 9M9 5.500h4" stroke="#e0e0e0" strokeWidth="1.300" />
      <path d="M8 8l7 6.500M15 8l-7 6.500" stroke="#fff" strokeWidth="1.500" />
    </Svg>
    <span className="ml-[3px] whitespace-nowrap text-[11px] font-bold tracking-[-0.35px]">Accessibility: Investigate</span>
    <div className="ml-auto flex h-full w-10 items-center justify-center bg-[#4d4d4d] pr-px">
      <Svg w={13} h={13}><path d="M.5 .5h12v12H.5zM4.500 0v13M8.500 0v13M0 4.500h13M0 8.500h13" stroke="#f0f0f0" /></Svg>
    </div>
    <Svg w={14} h={13} className="ml-[13px]">
      <path d="M.6 .6h12.800v11.800H.6z" stroke="#e0e0e0" strokeWidth="1.200" />
      <path d="M3.500 2.500h7v8h-7zM5 4.500h4M5 6.500h4M5 8.500h4" stroke="#e0e0e0" />
    </Svg>
    <Svg w={14} h={13} className="ml-[26px]">
      <path d="M.6 .6h12.800v11.800H.6z" stroke="#e0e0e0" strokeWidth="1.200" />
      <path d="M0 0h4.500v7H0zM5.500 0h4v7h-4z" fill="#e8e8e8" />
    </Svg>
    <Svg w={8} h={1} className="ml-[19px]"><path d="M0 .5h8" stroke="#e8e8e8" /></Svg>
    <div className="ml-[5px] flex h-[11px] w-[100px] items-center">
      <div className="h-px w-12 bg-[#c8c8c8]" />
      <div className="h-[11px] w-[5px] bg-white" />
      <div className="h-px flex-1 bg-[#c8c8c8]" />
    </div>
    <Svg w={8} h={8} className="ml-[5px]"><path d="M0 4.500h8M4 .5v8" stroke="#e8e8e8" /></Svg>
    <span className="ml-[13px] mr-[18px] w-[28px] text-[11px] tracking-[-0.4px]">100%</span>
  </div>
);

const Excel = () => (
  <div className="absolute left-[25px] top-[128px] flex h-[640px] w-[1341px] flex-col overflow-hidden border border-[#6e6e6e] bg-[#262626] shadow-[0_0_6px_rgba(0,0,0,0.7)]">
    <TitleBar />
    <TabRow />
    <Ribbon />
    <FormulaBar />
    <div className="flex h-[385px] shrink-0">
      <Sheet />
      <VScroll />
    </div>
    <SheetTabs />
    <StatusBar />
  </div>
);

export default function App() {
  return (
    <div className="relative h-[768px] w-[1366px] overflow-hidden bg-[#0d121c] font-['Open_Sans','Noto_Sans',sans-serif]">
      <Taskbar />
      <div className="flex h-[121px] justify-between bg-[#222]">
        <div className="mt-10 h-[81px] w-[200px] rounded-tl-lg bg-[#363636]" />
        <div className="mt-10 h-[81px] w-[200px] rounded-tr-lg bg-[#363636]" />
      </div>
      <div className="h-[103px] border-b border-[#2a3039] bg-[#02050c]" />
      <div className="ml-[16px] mt-[147px] h-[26px] border-b border-l border-[#313844] bg-[#131c28]" />
      <div className="ml-[16px] h-[341px] border-l border-[#313844] bg-[#0e131c]" />
      <Explorer />
      <Excel />
    </div>
  );
}
